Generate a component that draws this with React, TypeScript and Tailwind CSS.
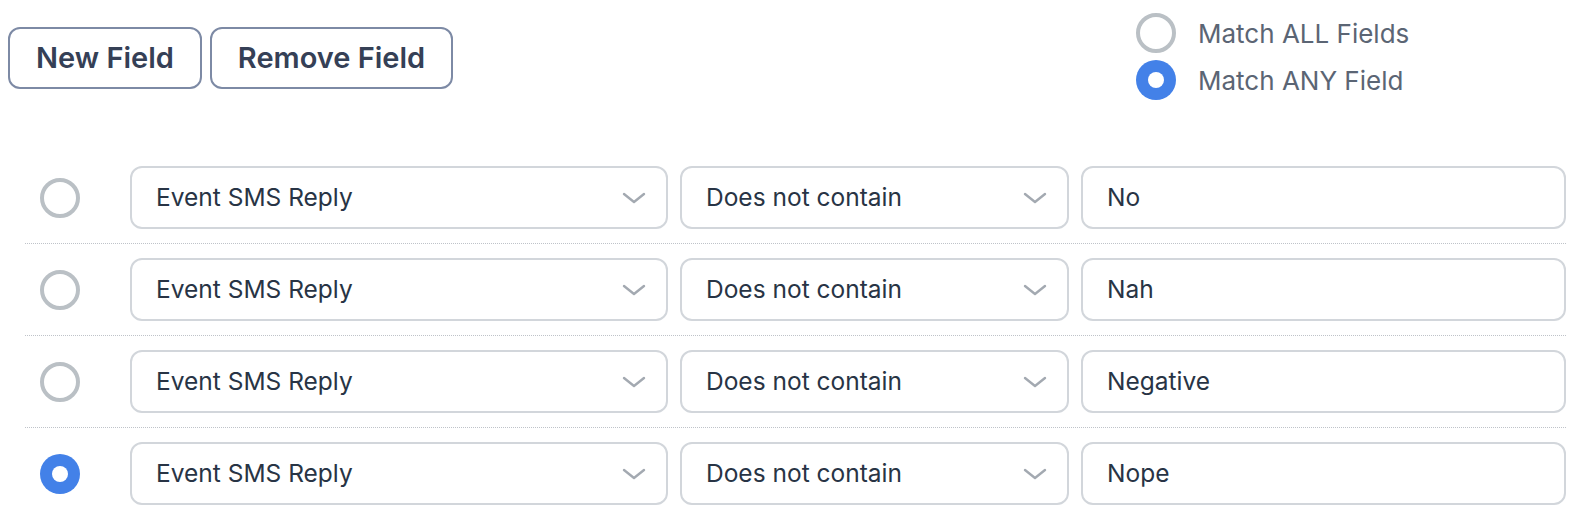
import React from 'react';

const rows = [
  { value: 'No', selected: false },
  { value: 'Nah', selected: false },
  { value: 'Negative', selected: false },
  { value: 'Nope', selected: true },
];

function Radio({ checked }: { checked: boolean }) {
  return checked ? (
    <span className="w-10 h-10 rounded-full bg-[#4381e8] flex items-center justify-center shrink-0">
      <span className="w-4 h-4 rounded-full bg-white" />
    </span>
  ) : (
    <span className="block w-10 h-10 rounded-full border-4 border-[#bac0c5] bg-white shrink-0" />
  );
}

function Chevron() {
  return (
    <svg width="24" height="12" viewBox="0 0 24 12" fill="none" className="shrink-0">
      <path d="M2 2l10 8 10-8" stroke="#a3a9b1" strokeWidth="2.4" strokeLinecap="round" strokeLinejoin="round" />
    </svg>
  );
}

function Select({ label, width }: { label: string; width: string }) {
  return (
    <div className={`${width} h-[63px] shrink-0 rounded-xl border-2 border-[#d2d6db] bg-white flex items-center justify-between pl-6 pr-5`}>
      <span className="text-[24.5px] text-[#283445]">{label}</span>
      <Chevron />
    </div>
  );
}

export default function App() {
  return (
    <div className="w-[1588px] h-[516px] bg-white font-['Inter','Noto_Sans',sans-serif]">
      {/* Top bar */}
      <div className="flex items-start justify-between pl-2">
        <div className="flex gap-2 pt-[27px]">
          <button className="h-[62px] px-[26px] rounded-xl border-2 border-[#7d8aa5] text-[29px] font-semibold text-[#354056]">
            New Field
          </button>
          <button className="h-[62px] px-[26px] rounded-xl border-2 border-[#7d8aa5] text-[29px] font-semibold text-[#354056]">
            Remove Field
          </button>
        </div>
        <div className="w-[452px] pt-[13px] flex flex-col gap-[7px]">
          <label className="flex items-center gap-[22px]">
            <Radio checked={false} />
            <span className="text-[26px] text-[#5b6574]">Match ALL Fields</span>
          </label>
          <label className="flex items-center gap-[22px]">
            <Radio checked={true} />
            <span className="text-[26px] text-[#5b6574]">Match ANY Field</span>
          </label>
        </div>
      </div>

      {/* Condition rows */}
      <div className="ml-[25px] mr-[22px] mt-[52px]">
        {rows.map((row, i) => (
          <div
            key={i}
            className={`flex items-center py-[14px] ${i < rows.length - 1 ? 'border-b border-dotted border-[#bfc3c9]' : ''}`}
          >
            <div className="w-[105px] shrink-0 pl-[15px]">
              <Radio checked={row.selected} />
            </div>
            <div className="flex gap-3 flex-1">
              <Select label="Event SMS Reply" width="w-[538px]" />
              <Select label="Does not contain" width="w-[389px]" />
              <div className="flex-1 h-[63px] rounded-xl border-2 border-[#d2d6db] bg-white flex items-center pl-6">
                <span className="text-[24.5px] text-[#283445]">{row.value}</span>
              </div>
            </div>
          </div>
        ))}
      </div>
    </div>
  );
}
